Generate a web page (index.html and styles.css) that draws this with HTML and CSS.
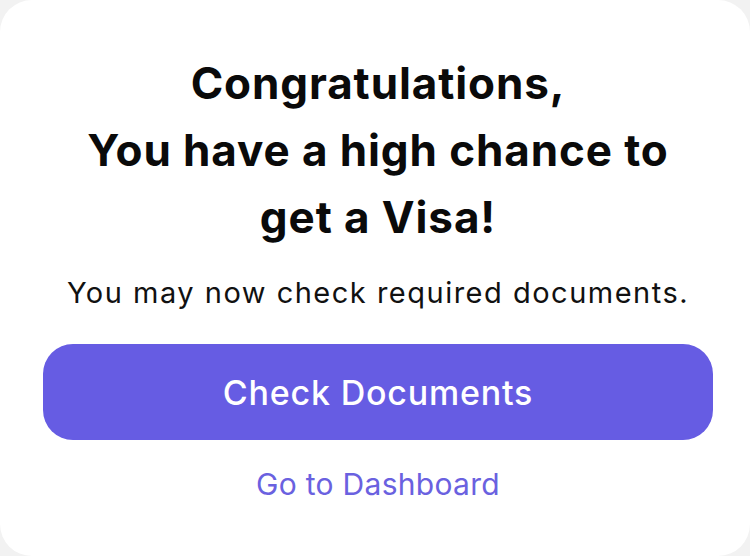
FILE: index.html
```html
<!DOCTYPE html>
<html>
<head>
<meta charset="utf-8">
<link rel="stylesheet" href="styles.css">
</head>
<body>
<div class="card">
  <h1 class="title">Congratulations,<br>You have a high chance to<br>get a Visa!</h1>
  <p class="subtitle">You may now check required documents.</p>
  <button class="primary">Check Documents</button>
  <a class="link" href="#">Go to Dashboard</a>
</div>
</body>
</html>
```

FILE: styles.css
```css
html, body {
  margin: 0;
  padding: 0;
  background: #f2f2f2;
}
body {
  width: 750px;
  height: 556px;
  font-family: Inter, "Noto Sans", sans-serif;
}
.card {
  box-sizing: border-box;
  width: 750px;
  height: 556px;
  background: #ffffff;
  border-radius: 32px;
  display: flex;
  flex-direction: column;
  align-items: center;
  padding: 50px 37px 0 43px;
}
.title {
  margin: 0;
  font-size: 44px;
  line-height: 67px;
  font-weight: 700;
  letter-spacing: 0.9px;
  text-align: center;
  color: #0a0a0a;
}
.subtitle {
  margin: 22px 0 0;
  font-size: 29px;
  line-height: 40px;
  color: #111;
  letter-spacing: 1.5px;
}
.primary {
  margin-top: 31px;
  width: 670px;
  height: 96px;
  border: none;
  border-radius: 30px;
  background: #665ce3;
  color: #fff;
  font-family: inherit;
  font-size: 34px;
  font-weight: 500;
  letter-spacing: 0.8px;
}
.link {
  margin-top: 26px;
  font-size: 30px;
  color: #6a61e0;
  text-decoration: none;
  letter-spacing: 0.3px;
}
```
